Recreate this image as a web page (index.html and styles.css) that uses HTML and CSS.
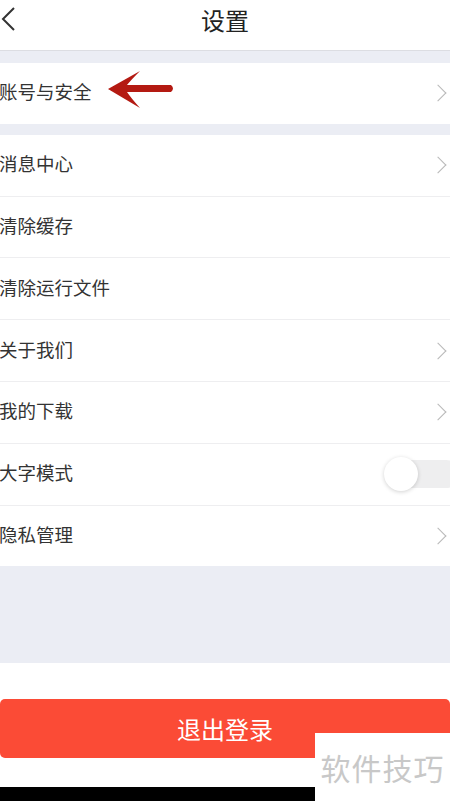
FILE: index.html
```html
<!DOCTYPE html>
<html lang="zh-CN">

<head>
    <meta charset="UTF-8">
    <meta name="viewport" content="width=device-width, initial-scale=1.0">
    <title>设置</title>
    <link rel="stylesheet" href="styles.css">
</head>

<body>
    <div class="page">
        <!-- Header -->
        <div class="header">
            <svg class="back" width="16" height="28" viewBox="0 0 16 28">
                <path d="M14 2 L3 13 L14 24" fill="none" stroke="#333" stroke-width="2" />
            </svg>
            <h1>设置</h1>
        </div>

        <div class="gap top"></div>

        <div class="group">
            <div class="row">
                <span class="label">账号与安全</span>
                <svg class="pointer" width="70" height="42" viewBox="0 0 70 42">
                    <path d="M2 20 L34 2 Q25 11 21 16 L65 16 Q69 19.5 65 23 L21 23 Q25 29 34 39 Z" fill="#b41a12" />
                </svg>
                <span class="chev"></span>
            </div>
        </div>

        <div class="gap"></div>

        <div class="group">
            <div class="row"><span class="label">消息中心</span><span class="chev"></span></div>
            <div class="row"><span class="label">清除缓存</span></div>
            <div class="row"><span class="label">清除运行文件</span></div>
            <div class="row"><span class="label">关于我们</span><span class="chev"></span></div>
            <div class="row"><span class="label">我的下载</span><span class="chev"></span></div>
            <div class="row">
                <span class="label">大字模式</span>
                <span class="toggle"><span class="knob"></span></span>
            </div>
            <div class="row"><span class="label">隐私管理</span><span class="chev"></span></div>
        </div>

        <div class="filler"></div>

        <div class="footer">
            <button class="logout">退出登录</button>
        </div>

        <div class="bar"></div>

        <div class="watermark">软件技巧</div>
    </div>
</body>

</html>
```

FILE: styles.css
```css
body {
    margin: 0;
    font-family: "Noto Sans CJK SC", "Noto Sans", sans-serif;
    background-color: #fff;
    color: #333;
}

.page {
    position: relative;
    width: 450px;
    height: 801px;
    overflow: hidden;
}

.header {
    height: 50px;
    display: flex;
    align-items: center;
    justify-content: center;
    border-bottom: 1px solid #dcdde2;
    position: relative;
}

.header h1 {
    margin: 0;
    font-size: 24px;
    font-weight: normal;
    color: #222;
    margin-top: -12px;
}

.back {
    position: absolute;
    left: 0;
    top: 6px;
}

.gap {
    height: 11px;
    background-color: #ebedf4;
}

.gap.top {
    height: 12px;
}

.group {
    background: white;
}

.row {
    height: 60.8px;
    display: flex;
    align-items: center;
    border-bottom: 1px solid #eeeef0;
    position: relative;
}

.row:last-child {
    border-bottom: none;
}

.label {
    font-size: 18.5px;
    margin-left: -1px;
    margin-top: -4px;
    color: #333;
}

.pointer {
    margin-left: 14px;
    margin-top: -7px;
}

.chev {
    position: absolute;
    right: 6px;
    top: 50%;
    width: 11px;
    height: 11px;
    border-top: 1.6px solid #b8b8b8;
    border-right: 1.6px solid #b8b8b8;
    transform: translateY(-50%) rotate(45deg);
}

.toggle {
    position: absolute;
    right: -10px;
    top: 50%;
    transform: translateY(-50%);
    width: 70px;
    height: 28px;
    border-radius: 14px;
    background-color: #eeeeef;
}

.knob {
    position: absolute;
    left: -6px;
    top: -3px;
    width: 34px;
    height: 34px;
    border-radius: 50%;
    background: white;
    box-shadow: 0px 1px 4px rgba(0, 0, 0, 0.18);
}

.filler {
    height: 97px;
    background-color: #ebedf4;
}

.footer {
    padding-top: 36px;
    height: 88px;
}

.logout {
    display: block;
    width: 100%;
    height: 59px;
    border: none;
    border-radius: 5px;
    background-color: #fb4b36;
    color: #fff;
    font-family: "Noto Sans CJK SC", sans-serif;
    font-size: 24px;
    padding: 0;
}

.bar {
    height: 15px;
    width: 315px;
    background: black;
}

.watermark {
    position: absolute;
    left: 315px;
    top: 733px;
    width: 135px;
    height: 68px;
    background: white;
    color: #c8c8c8;
    font-size: 30px;
    line-height: 68px;
    text-align: center;
    letter-spacing: 1px;
}
```
